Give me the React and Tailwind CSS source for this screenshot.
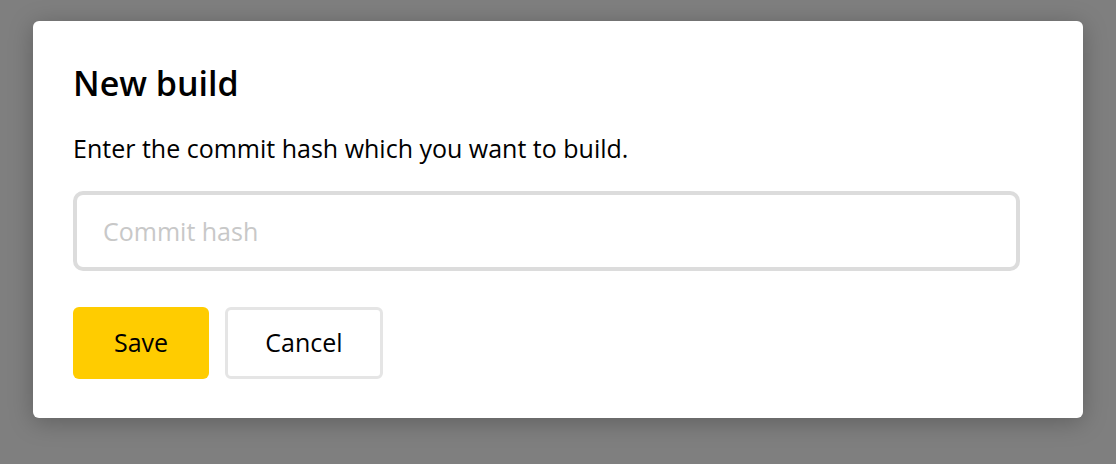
export default function App() {
  return (
    <div className="w-[1116px] h-[464px] bg-[#7f7f7f] pt-[21px] pl-[33px]" style={{ fontFamily: '"Open Sans", "Noto Sans", sans-serif' }}>
      <div className="w-[1050px] h-[397px] bg-white rounded-[6px] shadow-[0_4px_24px_rgba(0,0,0,0.25)] pt-[40px] pl-[40px]">
        <h1 className="text-[34px] leading-[44px] font-semibold text-black">New build</h1>
        <p className="mt-[27px] text-[25px] leading-[32px] text-black">Enter the commit hash which you want to build.</p>
        <input
          type="text"
          placeholder="Commit hash"
          className="mt-[27px] w-[947px] h-[80px] border-[4px] border-[#dcdcdc] rounded-[10px] px-[26px] text-[25px] outline-none placeholder:text-[#c8c8c8]"
        />
        <div className="mt-[36px] flex gap-[16px]">
          <button className="w-[136px] h-[72px] bg-[#ffcc00] rounded-[6px] text-[25px] text-black">Save</button>
          <button className="w-[158px] h-[72px] bg-white border-[3px] border-[#e5e5e5] rounded-[6px] text-[25px] text-black">Cancel</button>
        </div>
      </div>
    </div>
  );
}
